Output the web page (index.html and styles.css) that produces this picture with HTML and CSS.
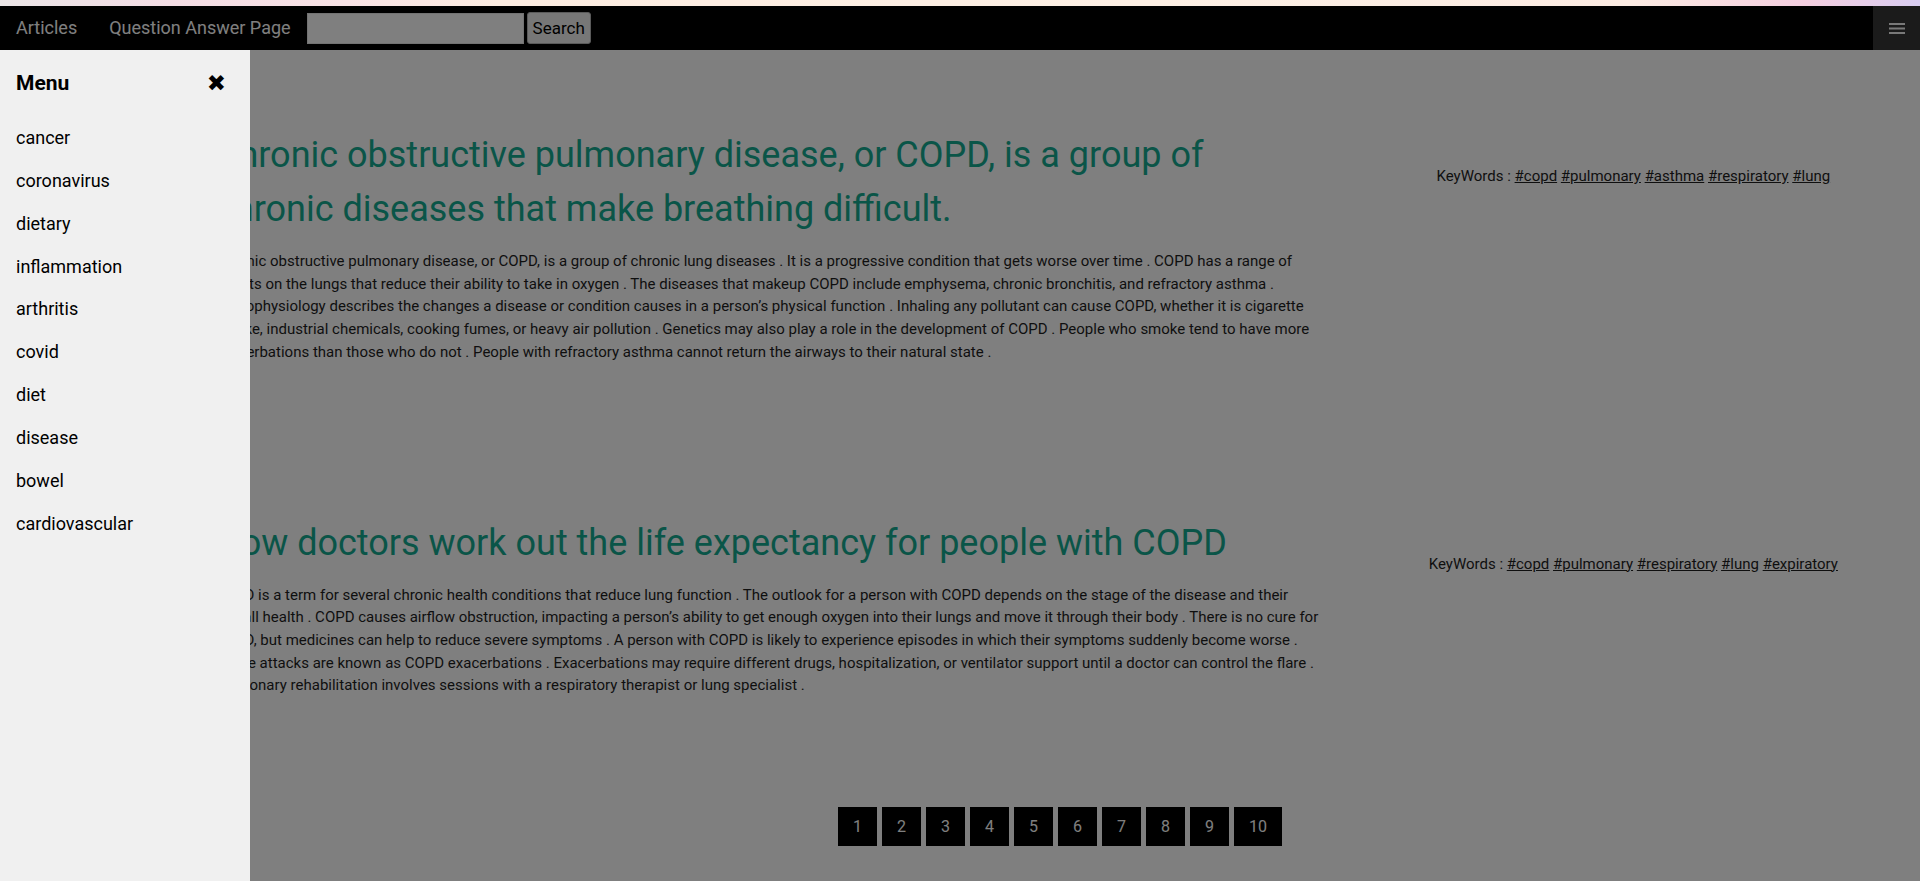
FILE: index.html
```html
<!DOCTYPE html>
<html lang="en">
<head>
<meta charset="utf-8">
<title>Articles</title>
<link rel="stylesheet" href="styles.css">
</head>
<body>
<div class="strip"></div>
<nav class="topnav">
  <a class="nav-link" href="#">Articles</a>
  <a class="nav-link" href="#">Question Answer Page</a>
  <form class="search">
    <input class="search-input" type="text">
    <button class="search-btn" type="button">Search</button>
  </form>
  <button class="menu-btn" type="button" aria-label="menu">
    <svg width="16" height="11" viewBox="0 0 16 11"><rect x="0" y="0" width="16" height="2" fill="#f2f2f2"/><rect x="0" y="4.5" width="16" height="2" fill="#f2f2f2"/><rect x="0" y="9" width="16" height="2" fill="#f2f2f2"/></svg>
  </button>
</nav>
<main class="main">
  <article class="post">
    <div class="post-body">
      <h1 class="post-title">Chronic obstructive pulmonary disease, or COPD, is a group of chronic diseases that make breathing difficult.</h1>
      <p class="post-text">Chronic obstructive pulmonary disease, or COPD, is a group of chronic lung diseases . It is a progressive condition that gets worse over time . COPD has a range of effects on the lungs that reduce their ability to take in oxygen . The diseases that makeup COPD include emphysema, chronic bronchitis, and refractory asthma . Pathophysiology describes the changes a disease or condition causes in a person’s physical function . Inhaling any pollutant can cause COPD, whether it is cigarette smoke, industrial chemicals, cooking fumes, or heavy air pollution . Genetics may also play a role in the development of COPD . People who smoke tend to have more exacerbations than those who do not . People with refractory asthma cannot return the airways to their natural state .</p>
    </div>
    <div class="post-tags">KeyWords : <a href="#">#copd</a> <a href="#">#pulmonary</a> <a href="#">#asthma</a> <a href="#">#respiratory</a> <a href="#">#lung</a></div>
  </article>
  <article class="post">
    <div class="post-body">
      <h1 class="post-title">How doctors work out the life expectancy for people with COPD</h1>
      <p class="post-text">COPD is a term for several chronic health conditions that reduce lung function . The outlook for a person with COPD depends on the stage of the disease and their overall health . COPD causes airflow obstruction, impacting a person’s ability to get enough oxygen into their lungs and move it through their body . There is no cure for COPD, but medicines can help to reduce severe symptoms . A person with COPD is likely to experience episodes in which their symptoms suddenly become worse . These attacks are known as COPD exacerbations . Exacerbations may require different drugs, hospitalization, or ventilator support until a doctor can control the flare . Pulmonary rehabilitation involves sessions with a respiratory therapist or lung specialist .</p>
    </div>
    <div class="post-tags">KeyWords : <a href="#">#copd</a> <a href="#">#pulmonary</a> <a href="#">#respiratory</a> <a href="#">#lung</a> <a href="#">#expiratory</a></div>
  </article>
  <div class="pager">
    <a class="page" href="#">1</a>
    <a class="page" href="#">2</a>
    <a class="page" href="#">3</a>
    <a class="page" href="#">4</a>
    <a class="page" href="#">5</a>
    <a class="page" href="#">6</a>
    <a class="page" href="#">7</a>
    <a class="page" href="#">8</a>
    <a class="page" href="#">9</a>
    <a class="page" href="#">10</a>
  </div>
</main>
<div class="overlay"></div>
<aside class="sidebar">
  <div class="side-head">
    <span class="side-title">Menu</span>
    <span class="side-close">✖</span>
  </div>
  <ul class="side-list">
    <li><a class="side-link" href="#">cancer</a></li>
    <li><a class="side-link" href="#">coronavirus</a></li>
    <li><a class="side-link" href="#">dietary</a></li>
    <li><a class="side-link" href="#">inflammation</a></li>
    <li><a class="side-link" href="#">arthritis</a></li>
    <li><a class="side-link" href="#">covid</a></li>
    <li><a class="side-link" href="#">diet</a></li>
    <li><a class="side-link" href="#">disease</a></li>
    <li><a class="side-link" href="#">bowel</a></li>
    <li><a class="side-link" href="#">cardiovascular</a></li>
  </ul>
</aside>
</body>
</html>
```

FILE: styles.css
```css
html, body {
  margin: 0;
  padding: 0;
  height: 881px;
  overflow: hidden;
}

body {
  font-family: Roboto, "Liberation Sans", sans-serif;
  background: #fff;
  color: #222;
}

.strip {
  height: 6px;
  background: linear-gradient(90deg, #ebe5e7 0%, #f4dde5 9%, #f9e3e6 18%, #fdede2 26%, #fdf0e5 60%, #fcebe3 85%, #f5cfe0 94%, #d9cdf1 100%);
}

.topnav {
  display: flex;
  align-items: center;
  height: 44px;
  background: #000;
}

.nav-link {
  color: #fff;
  font-size: 18px;
  line-height: 44px;
  padding: 0 16px;
  text-decoration: none;
}

.search {
  display: flex;
  align-items: center;
  gap: 3px;
  margin: 0;
}

.search-input {
  box-sizing: border-box;
  width: 217px;
  height: 31px;
  margin: 0;
  border: 1px solid #e6e6e6;
  background: #fff;
}

.search-btn {
  box-sizing: border-box;
  height: 32px;
  padding: 0 5px;
  margin: 0;
  font-family: Roboto, "Liberation Sans", sans-serif;
  font-size: 17px;
  color: #000;
  background: #efefef;
  border: 1px solid #b5b5b5;
  border-radius: 3px;
}

.menu-btn {
  margin-left: auto;
  width: 47px;
  height: 44px;
  padding: 0;
  border: 0;
  background: #363636;
  display: flex;
  align-items: center;
  justify-content: center;
}

.main {
  margin-left: 200px;
  padding-top: 78px;
}

.post {
  display: grid;
  grid-template-columns: 2fr 1fr;
}

.post + .post {
  margin-top: 152px;
}

.post-body {
  padding: 0 15px;
}

.post-title {
  margin: 0;
  padding-right: 30px;
  font-size: 36px;
  font-weight: 400;
  line-height: 54px;
  color: #15aa90;
}

.post-text {
  margin: 14px 0 0;
  font-size: 15px;
  line-height: 22.7px;
  color: #1e1e1e;
}

.post-tags {
  padding-top: 37px;
  text-align: center;
  font-size: 15px;
  line-height: 22.5px;
  color: #1e1e1e;
}

.post-tags a {
  color: #1e1e1e;
  text-decoration: underline;
}

.pager {
  display: flex;
  justify-content: center;
  gap: 5px;
  margin-top: 110px;
}

.page {
  height: 39px;
  min-width: 9px;
  padding: 0 15px;
  background: #000;
  color: #fff;
  font-size: 16px;
  line-height: 39px;
  text-align: center;
  text-decoration: none;
}

.overlay {
  position: fixed;
  top: 6px;
  left: 0;
  right: 0;
  bottom: 0;
  background: rgba(0, 0, 0, 0.5);
  z-index: 10;
}

.sidebar {
  position: fixed;
  top: 50px;
  left: 0;
  bottom: 0;
  width: 250px;
  background: #f0f0f0;
  z-index: 20;
}

.side-head {
  display: flex;
  align-items: center;
  justify-content: space-between;
  height: 32px;
  padding: 17px 24px 16px 16px;
}

.side-title {
  font-size: 21px;
  font-weight: 700;
  line-height: 32px;
  color: #000;
}

.side-close {
  font-family: "DejaVu Sans", sans-serif;
  font-size: 23px;
  line-height: 32px;
  color: #000;
}

.side-list {
  list-style: none;
  margin: 2px 0 0;
  padding: 0;
}

.side-link {
  display: block;
  padding: 8px 16px;
  font-size: 18px;
  line-height: 26.86px;
  color: #000;
  text-decoration: none;
}
```
